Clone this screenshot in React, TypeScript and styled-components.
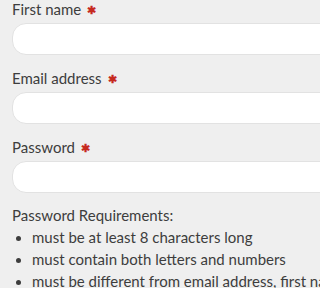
import React from 'react';
import styled, { createGlobalStyle } from 'styled-components';

const GlobalStyle = createGlobalStyle`
  html, body {
    margin: 0;
    padding: 0;
    background: #efefef;
  }
  body {
    font-family: Lato, "Liberation Sans", sans-serif;
    color: #3d3d3d;
  }
`;

const Viewport = styled.div`
  width: 100vw;
  height: 100vh;
  overflow: hidden;
`;

const Form = styled.form`
  width: 340px;
  padding: 0 12px;
`;

const Field = styled.div`
  margin-bottom: 14px;
`;

const Label = styled.label`
  display: block;
  font-size: 15px;
  line-height: 19px;
  margin-bottom: 4px;
`;

const Required = styled.span`
  color: #c62a1f;
  font-size: 11px;
  font-weight: 700;
  margin-left: 6px;
  vertical-align: 1px;
`;

const Input = styled.input`
  display: block;
  box-sizing: border-box;
  width: 100%;
  height: 32px;
  border: 1px solid #e2e2e2;
  border-radius: 14px;
  background: #fff;
  outline: none;
`;

const Requirements = styled.div`
  margin-top: -3px;
  font-size: 15px;
  line-height: 22px;
`;

const List = styled.ul`
  margin: 0;
  padding: 0;
  list-style: none;
`;

const Item = styled.li`
  display: flex;
  white-space: nowrap;
  &::before {
    content: '';
    flex: none;
    width: 5px;
    height: 5px;
    border-radius: 50%;
    background: #3d3d3d;
    margin: 10px 11px 0 4px;
  }
`;

const fields = [
  { id: 'first', label: 'First name', type: 'text' },
  { id: 'email', label: 'Email address', type: 'email' },
  { id: 'password', label: 'Password', type: 'password' },
];

const rules = [
  'must be at least 8 characters long',
  'must contain both letters and numbers',
  'must be different from email address, first name',
];

const App: React.FC = () => (
  <Viewport>
    <GlobalStyle />
    <Form>
      {fields.map(f => (
        <Field key={f.id}>
          <Label htmlFor={f.id}>
            {f.label}
            <Required>✱</Required>
          </Label>
          <Input id={f.id} type={f.type} />
        </Field>
      ))}
      <Requirements>
        Password Requirements:
        <List>
          {rules.map(r => (
            <Item key={r}>{r}</Item>
          ))}
        </List>
      </Requirements>
    </Form>
  </Viewport>
);

export default App;
